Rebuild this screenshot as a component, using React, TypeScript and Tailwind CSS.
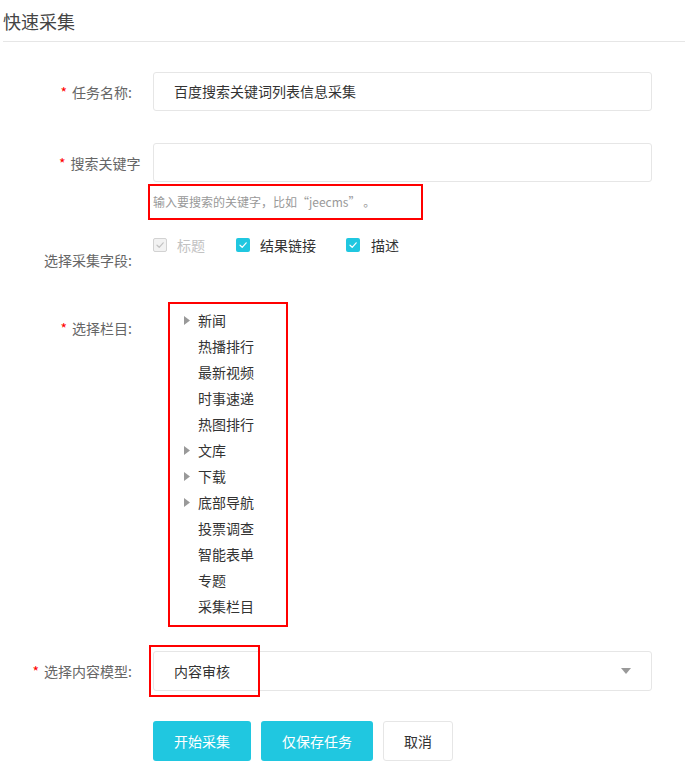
import React from 'react';

const treeItems: { name: string; hasChildren: boolean }[] = [
  { name: '新闻', hasChildren: true },
  { name: '热播排行', hasChildren: false },
  { name: '最新视频', hasChildren: false },
  { name: '时事速递', hasChildren: false },
  { name: '热图排行', hasChildren: false },
  { name: '文库', hasChildren: true },
  { name: '下载', hasChildren: true },
  { name: '底部导航', hasChildren: true },
  { name: '投票调查', hasChildren: false },
  { name: '智能表单', hasChildren: false },
  { name: '专题', hasChildren: false },
  { name: '采集栏目', hasChildren: false },
];

const Check: React.FC<{ disabled?: boolean }> = ({ disabled }) => (
  <span
    className={`flex h-[14px] w-[14px] items-center justify-center rounded-[2px] ${
      disabled ? 'border border-[#d2d2d2] bg-[#f2f2f2]' : 'bg-[#20c7e0]'
    }`}
  >
    <svg width="10" height="10" viewBox="0 0 10 10" fill="none">
      <path
        d="M2 5.2 L4.2 7.3 L8.2 2.8"
        stroke={disabled ? '#c2c2c2' : '#ffffff'}
        strokeWidth="1.2"
        strokeLinecap="round"
        strokeLinejoin="round"
      />
    </svg>
  </span>
);

const Label: React.FC<{ text: string; required?: boolean; className?: string }> = ({
  text,
  required,
  className = '',
}) => (
  <div className={`flex w-[153px] shrink-0 justify-end pr-[21px] text-[14px] leading-[20px] text-[#666] ${className}`}>
    <span className="whitespace-nowrap">
      {required && <span className="mr-[5px] text-[#ff0000]">*</span>}
      {text}:
    </span>
  </div>
);

export default function App() {
  return (
    <div
      className="min-h-[781px] w-[685px] bg-white text-[#333]"
      style={{ fontFamily: '"Noto Sans CJK SC", "Noto Sans", sans-serif' }}
    >
      {/* header */}
      <div className="ml-[3px] flex h-[42px] items-center border-b border-[#e6e6e6]">
        <h2 className="text-[18px] font-normal leading-[24px] text-[#444]">快速采集</h2>
      </div>

      <form className="pb-[20px]">
        {/* task name */}
        <div className="mt-[30px] flex h-[39px] items-center">
          <Label text="任务名称" required />
          <div className="flex h-[39px] w-[499px] items-center rounded-[3px] border border-[#e6e6e6] pl-[20px] text-[14px] text-[#333]">
            百度搜索关键词列表信息采集
          </div>
        </div>

        {/* keyword */}
        <div className="mt-[32px] flex h-[39px] items-center">
          <div className="flex w-[153px] shrink-0 text-[14px] leading-[20px] text-[#666]">
            <span className="ml-[59px] whitespace-nowrap">
              <span className="mr-[5px] text-[#ff0000]">*</span>搜索关键字
            </span>
          </div>
          <div className="h-[39px] w-[499px] rounded-[3px] border border-[#e6e6e6]" />
        </div>
        <div className="mt-[2px] flex">
          <div className="w-[148px] shrink-0" />
          <div className="flex h-[36px] w-[275px] items-center border-2 border-[#ff0000] pl-[3px] text-[12px] text-[#999]">
            输入要搜索的关键字，比如“jeecms” 。
          </div>
        </div>

        {/* fields */}
        <div className="mt-[12px] flex items-start">
          <Label text="选择采集字段" className="mt-[18px]" />
          <div className="flex h-[26px] items-center text-[14px]">
            <Check disabled />
            <span className="ml-[10px] text-[#c2c2c2]">标题</span>
            <span className="ml-[31px]">
              <Check />
            </span>
            <span className="ml-[10px] text-[#333]">结果链接</span>
            <span className="ml-[30px]">
              <Check />
            </span>
            <span className="ml-[11px] text-[#333]">描述</span>
          </div>
        </div>

        {/* channel tree */}
        <div className="mt-[32px] flex items-start">
          <Label text="选择栏目" required className="mt-[16px]" />
          <div className="ml-[15px] w-[120px] border-2 border-[#ff0000] pb-[6px] pt-[3px]">
            {treeItems.map((item) => (
              <div key={item.name} className="flex h-[26px] items-center pl-[14px] text-[14px] text-[#333]">
                <span className="flex w-[14px] items-center">
                  {item.hasChildren && (
                    <svg width="6" height="9" viewBox="0 0 6 9">
                      <path d="M0 0 L6 4.5 L0 9 Z" fill="#999" />
                    </svg>
                  )}
                </span>
                <span className="whitespace-nowrap">{item.name}</span>
              </div>
            ))}
          </div>
        </div>

        {/* model */}
        <div className="mt-[24px] flex h-[40px] items-center">
          <Label text="选择内容模型" required />
          <div className="relative flex h-[40px] w-[499px] items-center justify-between rounded-[3px] border border-[#e6e6e6] pl-[20px] pr-[20px] text-[14px] text-[#333]">
            <span>内容审核</span>
            <svg width="10" height="6" viewBox="0 0 10 6">
              <path d="M0 0 L10 0 L5 6 Z" fill="#999" />
            </svg>
            <div className="pointer-events-none absolute left-[-5px] top-[-7px] h-[52px] w-[111px] border-2 border-[#ff0000]" />
          </div>
        </div>

        {/* actions */}
        <div className="mt-[30px] flex">
          <div className="w-[153px] shrink-0" />
          <div className="flex gap-[10px] text-[14px]">
            <button type="button" className="h-[40px] w-[98px] rounded-[3px] bg-[#20c7e0] text-white">
              开始采集
            </button>
            <button type="button" className="h-[40px] w-[112px] rounded-[3px] bg-[#20c7e0] text-white">
              仅保存任务
            </button>
            <button type="button" className="h-[40px] w-[70px] rounded-[3px] border border-[#e6e6e6] bg-white text-[#333]">
              取消
            </button>
          </div>
        </div>
      </form>
    </div>
  );
}
